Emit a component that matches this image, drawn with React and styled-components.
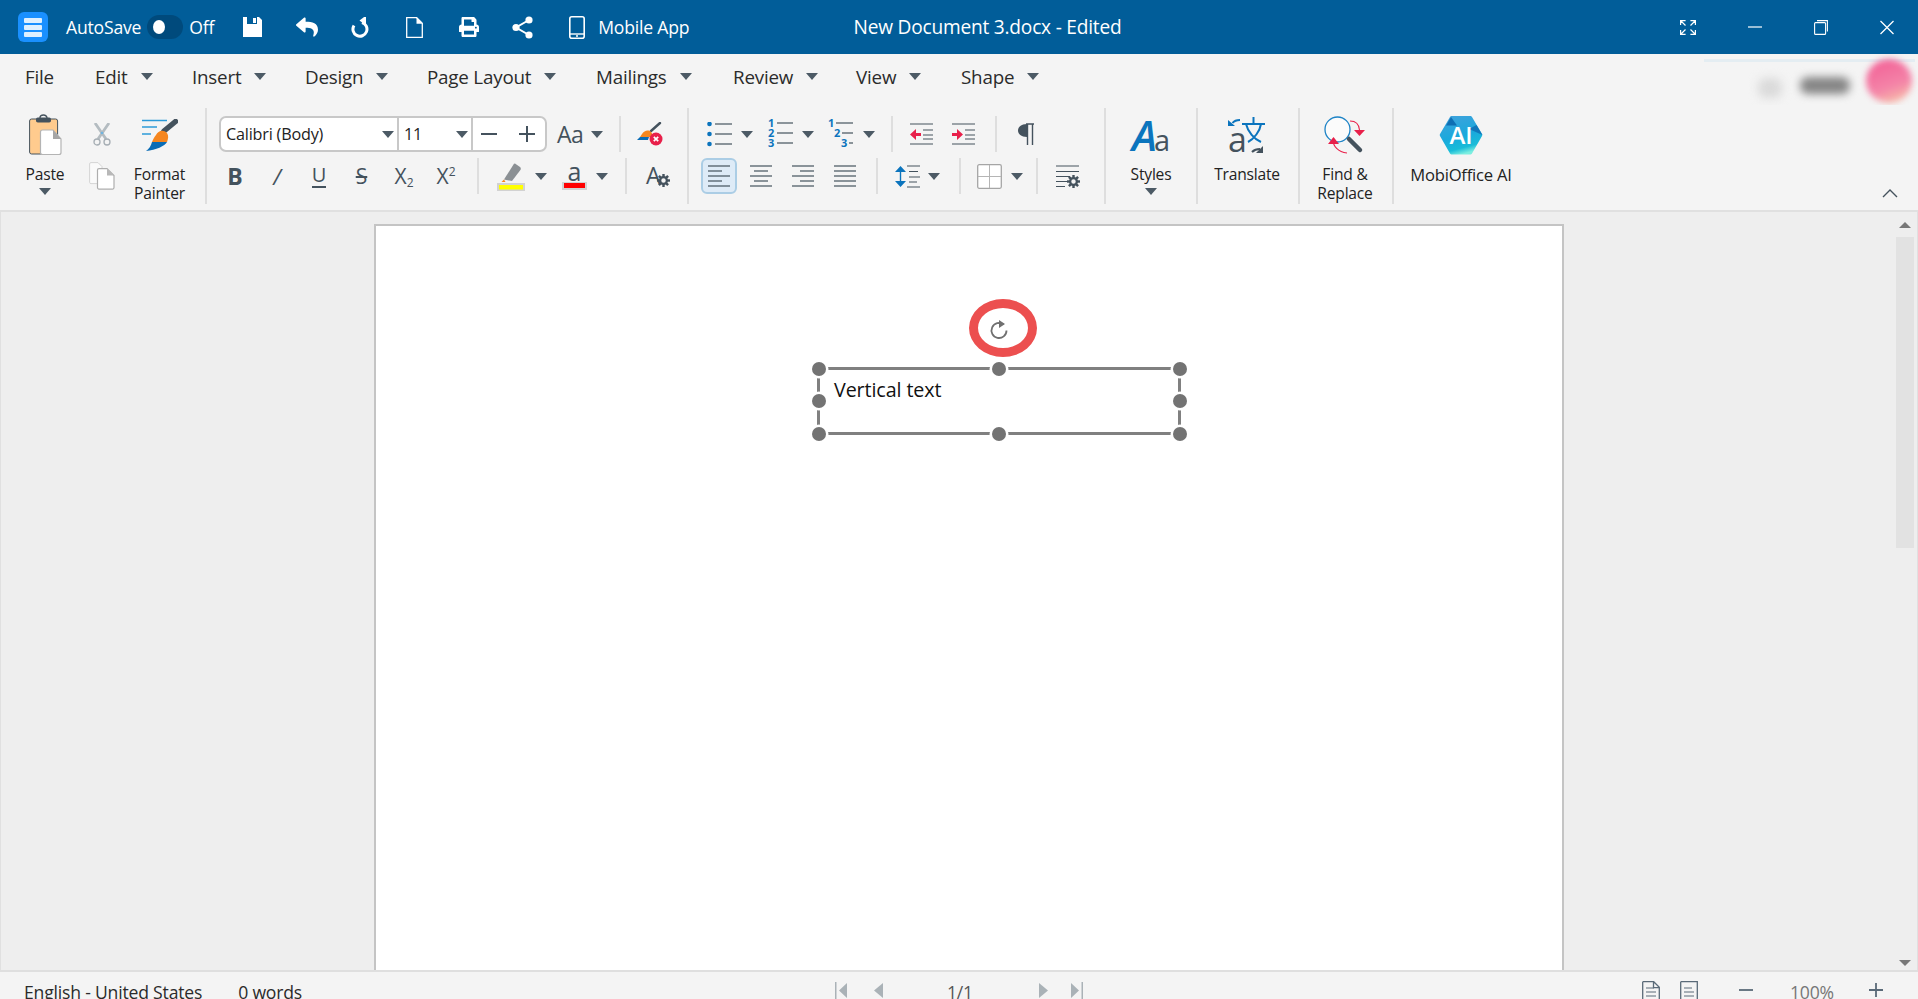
import React from "react";
import styled, { createGlobalStyle } from "styled-components";
import { FaReply, FaPrint } from "react-icons/fa";

const DARK = "#44525d";
const BLUE = "#0b74bd";
const RED = "#e8204a";
const FONT = '"Open Sans", "Noto Sans", sans-serif';

const Global = createGlobalStyle`
  * { box-sizing: border-box; }
  html, body { margin: 0; padding: 0; height: 100%; overflow: hidden; background: #f4f4f4; }
  body { font-family: ${FONT}; color: #222; }
  #root { height: 100%; }
`;

const Shell = styled.div`
  height: 999px; width: 1918px; display: flex; flex-direction: column; overflow: hidden;
`;

/* ---------- title bar ---------- */
const TitleBar = styled.header`
  height: 54px; flex: none; background: #015d99; color: #fff;
  display: grid; grid-template-columns: 700px 575px 1fr; align-items: center;
`;
const TitleLeft = styled.div`display: flex; align-items: center; height: 100%;`;
const TitleSlot = styled.div`
  display: flex; align-items: center; margin-left: ${p => p.$ml || 0}px;
  font-size: 17.6px; letter-spacing: -0.2px; white-space: nowrap;
`;
const AppIcon = styled.div`
  width: 30px; height: 30px; margin-left: 18px; border-radius: 6px; background: #1a90ff;
  display: flex; flex-direction: column; justify-content: center; gap: 2px; padding: 0 6px;
  & > i { display: block; height: 5px; background: #dff0ff; border-radius: 1px; }
`;
const Toggle = styled.div`
  width: 36px; height: 24px; border-radius: 12px; background: #004a7c; margin-left: 6px;
  display: flex; align-items: center; padding-left: 6px;
  & > i { display: block; width: 12px; height: 14px; border-radius: 50%; background: #fff; }
`;
const DocTitle = styled.div`
  text-align: center; font-size: 19.100px; letter-spacing: -0.2px; white-space: nowrap;
`;
const WindowControls = styled.div`
  display: flex; justify-content: flex-end; align-items: center; gap: 52px; padding-right: 24px;
`;

const Save = () => (
  <svg width="19" height="20" viewBox="0 0 19 20">
    <path fill="#fff" d="M0 0h16l3 3v17H0z" />
    <path fill="#015d99" d="M4 0h10v7H4z" />
    <path fill="#fff" d="M10 1h3v5h-3z" />
  </svg>
);
const Redo = () => (
  <svg width="20" height="21" viewBox="0 0 20 21" fill="none">
    <g transform="translate(20 0) scale(-1 1)">
      <path d="M9 5.500a7 7 0 1 0 8 3" stroke="#fff" strokeWidth="3" />
      <path d="M9 0.500v10l-6.500-5z" fill="#fff" transform="translate(2 -1) rotate(180 6 5)" />
    </g>
  </svg>
);
const NewDoc = () => (
  <svg width="17" height="21" viewBox="0 0 17 21" fill="none">
    <path d="M.7.7h10l5.600 5.600v14H.7z" stroke="#fff" strokeWidth="1.300" />
    <path d="M10.500.7v6h6" fill="#fff" />
  </svg>
);
const Share = () => (
  <svg width="21" height="23" viewBox="0 0 21 23" fill="none">
    <path d="M17 4 4 11.500 17 19" stroke="#fff" strokeWidth="2" />
    <circle cx="17" cy="4" r="3.600" fill="#fff" />
    <circle cx="4" cy="11.500" r="3.600" fill="#fff" />
    <circle cx="17" cy="19" r="3.600" fill="#fff" />
  </svg>
);
const Phone = () => (
  <svg width="16" height="23" viewBox="0 0 16 23" fill="none">
    <rect x=".8" y=".8" width="14.400" height="21.400" rx="2" stroke="#fff" strokeWidth="1.600" />
    <path d="M1 18h14" stroke="#fff" strokeWidth="1.400" />
    <circle cx="8" cy="20" r="1" fill="#fff" />
  </svg>
);
const Expand = () => (
  <svg width="16" height="15" viewBox="0 0 16 15" fill="none" stroke="#fff" strokeWidth="1.200">
    <path d="M.6 5V.6h5M1 1l4.500 4.500M15.400 5V.6h-5M15 1l-4.500 4.500M.6 10v4.400h5M1 14l4.500-4.500M15.400 10v4.400h-5M15 14l-4.500-4.500" />
  </svg>
);
const Minimize = () => (
  <svg width="14" height="15" viewBox="0 0 14 15"><path d="M0 7h14" stroke="#fff" strokeWidth="1.200" /></svg>
);
const Restore = () => (
  <svg width="14" height="15" viewBox="0 0 14 15" fill="none" stroke="#fff" strokeWidth="1.100">
    <rect x=".6" y="2.600" width="11" height="11.800" rx="1" />
    <path d="M3 .6h10.400v11" />
  </svg>
);
const CloseX = () => (
  <svg width="14" height="15" viewBox="0 0 14 15"><path d="M.5 1l13 13M13.500 1l-13 13" stroke="#fff" strokeWidth="1.300" /></svg>
);

/* ---------- menu bar ---------- */
const MenuBar = styled.nav`
  height: 51px; flex: none; position: relative; background: #f4f4f4; overflow: hidden;
  display: flex; align-items: center; padding: 0 0 6px 25px;
`;
const MenuItem = styled.div`
  width: ${p => p.$w}px; display: flex; align-items: center; gap: 13px;
  font-size: 18.800px; letter-spacing: -0.2px; color: #2b2b2b; white-space: nowrap;
`;
const Caret = styled.i`
  display: block; flex: none; width: 0; height: 0;
  border-left: 6px solid transparent; border-right: 6px solid transparent;
  border-top: 7px solid #4c5a65; margin-top: ${p => p.$mt || 0}px;
`;
const BlurLine = styled.div`
  position: absolute; left: 1704px; top: 5px; width: 211px; height: 3px; background: #e4edf2; filter: blur(.6px);
`;
const BlurBlob = styled.div`
  position: absolute; left: ${p => p.$x}px; top: ${p => p.$y}px; width: ${p => p.$w}px; height: ${p => p.$h}px;
  background: ${p => p.$bg}; border-radius: ${p => p.$r || "8px"}; filter: blur(${p => p.$blur || 4}px);
`;

/* ---------- ribbon ---------- */
const Ribbon = styled.section`
  height: 107px; flex: none; display: flex; align-items: stretch; background: #f4f4f4;
  padding: 3px 0 6px; border-bottom: 2px solid #e0e0e0;
`;
const GroupSep = styled.div`flex: none; width: 2px; background: #dedede;`;
const Group = styled.div`
  flex: none; width: ${p => p.$w}px; display: flex;
`;
const ToolGroup = styled(Group)`
  flex-direction: column; padding-top: 8px; gap: 6px;
`;
const ToolRow = styled.div`height: 36px; display: flex; align-items: center;`;
const Tool = styled.div`
  flex: none; display: flex; align-items: center; justify-content: ${p => p.$w ? "center" : "flex-start"};
  width: ${p => p.$w ? p.$w + "px" : "auto"}; gap: ${p => p.$gap || 0}px; margin-left: ${p => p.$ml || 0}px;
  color: ${DARK};
`;
const RowSep = styled.div`
  flex: none; width: 2px; height: 36px; background: #dedede; margin-left: ${p => p.$ml || 0}px;
`;
const Big = styled.div`
  flex: none; width: ${p => p.$w ? p.$w + "px" : "100%"}; display: flex; flex-direction: column; align-items: center;
`;
const BigIcon = styled.div`
  height: 54px; display: flex; align-items: center; justify-content: center;
`;
const BigLabel = styled.div`
  margin-top: 3px; font-size: ${p => p.$size || 15.6}px; line-height: 19px; letter-spacing: -0.2px; text-align: center; color: #222;
  white-space: nowrap;
`;
const BigCaret = styled(Caret)`margin-top: 4px;`;
const SmallCol = styled.div`
  flex: none; width: 24px; display: flex; flex-direction: column; align-items: center; padding-top: 15px; gap: 16px;
`;
const FontBox = styled.div`
  width: 328px; height: 36px; margin-left: 12px; background: #fff; border: 2px solid #c8c8c8; border-radius: 7px;
  display: flex; align-items: stretch; flex: none;
`;
const FontCell = styled.div`
  width: ${p => p.$w}px; display: flex; align-items: center; justify-content: space-between;
  padding: 0 ${p => p.$pr ?? 3}px 0 ${p => p.$pl ?? 5}px; border-right: ${p => p.$last ? "none" : "2px solid #c8c8c8"};
  font-size: 16.200px; letter-spacing: -0.2px; color: #222;
`;
const CaseText = styled.span`font-size: 23px; letter-spacing: -0.5px; color: ${DARK}; line-height: 1;`;
const Glyph = styled.span`
  font-size: ${p => p.$size || 21}px; font-weight: ${p => p.$weight || 400}; font-style: ${p => p.$italic ? "italic" : "normal"};
  line-height: 1; color: ${DARK};
  text-decoration: ${p => p.$strike ? "line-through" : "none"};
  border-bottom: ${p => p.$under ? `2px solid ${DARK}` : "none"};
  padding-bottom: ${p => p.$under ? 1 : 0}px;
  & > sub, & > sup { font-size: 12px; line-height: 0; vertical-align: ${p => p.$sup ? "8px" : "-3px"}; }
`;
const ColorA = styled.div`
  width: 25px; height: 28px; display: flex; flex-direction: column; align-items: center; justify-content: flex-end;
`;
const ColorLetter = styled.span`
  font-size: 25px; line-height: 18px; color: ${DARK}; height: 19px; margin-bottom: 1px;
`;
const ColorBar = styled.i`
  display: block; width: 100%; height: 8px; background: #f00; border: 2px solid #d2d2d2; border-top-width: 1px;
`;
const LetterGear = styled.div`
  width: 24px; height: 24px; position: relative; color: ${DARK}; font-size: 23px; line-height: 22px;
  & > svg { position: absolute; right: 0; bottom: 1px; }
`;
const ActiveAlign = styled.div`
  width: 36px; height: 36px; margin-left: 12px; flex: none; border: 2px solid #abcde5; border-radius: 6px; background: #deebf7;
  display: flex; align-items: center; justify-content: center;
`;
const StyleMark = styled.div`
  width: 38px; height: 36px; display: flex; align-items: baseline; justify-content: center; line-height: 36px;
`;
const StyleA = styled.span`font-size: 42px; font-weight: 600; font-style: italic; color: ${BLUE}; letter-spacing: -3px; line-height: 36px;`;
const Stylea = styled.span`font-size: 29px; color: ${DARK}; line-height: 36px;`;
const Collapse = styled.div`
  margin-left: auto; align-self: flex-end; padding: 0 20px 6px 0; display: flex;
`;
const AiGroup = styled(Group)`flex: 1; width: auto;`;

const Gear = ({ size = 14, color = DARK }) => (
  <svg width={size} height={size} viewBox="0 0 14 14">
    {[0, 45, 90, 135, 180, 225, 270, 315].map(a => (
      <rect key={a} x="5.700" y="0" width="2.600" height="3.500" fill={color} transform={`rotate(${a} 7 7)`} />
    ))}
    <circle cx="7" cy="7" r="3.600" fill="none" stroke={color} strokeWidth="2.400" />
  </svg>
);

const PasteIcon = () => (
  <svg width="33" height="42" viewBox="0 0 33 42">
    <rect x=".6" y="5" width="28" height="35" rx="2" fill="#ffcb8e" stroke={DARK} strokeWidth="1" />
    <path d="M11 4a3.500 3 0 0 1 7 0" fill="none" stroke={DARK} strokeWidth="1.400" />
    <rect x="7" y="3.500" width="15" height="5" rx="1.800" fill={DARK} />
    <path d="M13.500 16h10.500l8 9v13.500a2 2 0 0 1-2 2H13.500a2 2 0 0 1-2-2V18a2 2 0 0 1 2-2z" fill="#fff" stroke="#b4b4b4" strokeWidth="1.200" />
    <path d="M24 16v9h8z" fill="#a6a6a6" />
  </svg>
);
const Scissors = () => (
  <svg width="18" height="23" viewBox="0 0 18 23" fill="none">
    <path d="M2 0l11 16M16 0L5 16" stroke="#b4bcc1" strokeWidth="2.800" />
    <circle cx="4" cy="19" r="3" stroke="#a6aeb4" strokeWidth="1.300" />
    <circle cx="14" cy="19" r="3" stroke="#a6aeb4" strokeWidth="1.300" />
    <circle cx="9" cy="10" r="1.300" fill="#6fb4e0" />
  </svg>
);
const CopyIcon = () => (
  <svg width="26" height="28" viewBox="0 0 26 28" fill="none">
    <path d="M2 .6h7l4 4v17H2a1.400 1.400 0 0 1-1.400-1.400V2A1.400 1.400 0 0 1 2 .6z" fill="#fafafa" stroke="#d4d4d4" />
    <path d="M10 6.600h8l7 7v12a1.500 1.500 0 0 1-1.500 1.500H10a1.500 1.500 0 0 1-1.500-1.500v-17.500A1.500 1.500 0 0 1 10 6.600z" fill="#fff" stroke="#aeaeae" strokeWidth="1.200" />
    <path d="M18 6.600v7h7z" fill="#b8b8b8" />
  </svg>
);
const Painter = () => (
  <svg width="36" height="33" viewBox="0 0 36 33" fill="none">
    <path d="M0 1.500h25M0 8h15M0 15h9" stroke="#2c9ad8" strokeWidth="1.400" />
    <path d="M33.500 2.500 22 12" stroke={DARK} strokeWidth="5.500" strokeLinecap="round" />
    <path d="M14 16C16 12 21 10 25 14c2 3 1 6 0 9H10c1-2 2-5 4-7z" fill="#f5861f" />
    <path d="M10 23h15c-2 4-11 8-21 9 3-2 5-5 6-9z" fill="#0a6cb5" />
  </svg>
);
const ClearFormat = () => (
  <svg width="26" height="24" viewBox="0 0 26 24" fill="none">
    <path d="M23 1 14 9" stroke={DARK} strokeWidth="2.400" strokeLinecap="round" />
    <path d="M5 12c2-3 6-5 9-2 1 1 2 3 2 5H3z" fill="#f5861f" />
    <path d="M3 15h9l-1 3H0c1-1 2-2 3-3z" fill="#0a6cb5" />
    <circle cx="19" cy="17" r="6.500" fill={RED} />
    <path d="M16.800 14.800l4.400 4.400M21.200 14.800l-4.400 4.400" stroke="#fff" strokeWidth="1.700" />
  </svg>
);
const Highlighter = () => (
  <svg width="28" height="29" viewBox="0 0 28 29">
    <path d="M19 1.500l5 3.500c1 .8 1 2 .4 3L16 19l-8-1.500L18 1.800z" fill="#8b9094" transform="translate(-1 0)" />
    <path d="M7 17.500l-2.500 2.500h4z" fill="#f5861f" />
    <rect x="1" y="22" width="26" height="6.500" fill="#ff0" stroke="#d2d2d2" strokeWidth="2" />
  </svg>
);
const Lines = ({ rows, w = 22, h = 22 }) => (
  <svg width={w} height={h} viewBox={`0 0 ${w} ${h}`} fill="none" stroke={DARK} strokeWidth="1.200">
    {rows.map((r, i) => <path key={i} d={`M${r[0]} ${r[2]}H${r[1]}`} />)}
  </svg>
);
const ys = [1, 6, 11, 16, 21];
const AlignLines = ({ kind }) => {
  const short = { left: [0, 14], center: [4, 18], right: [8, 22], just: [0, 22] }[kind];
  return <Lines rows={ys.map((y, i) => (i % 2 ? [short[0], short[1], y] : [0, 22, y]))} />;
};
const Bullets = () => (
  <svg width="25" height="25" viewBox="0 0 25 25" fill="none">
    {[2, 12, 22].map(y => (
      <g key={y}>
        <circle cx="2.500" cy={y} r="2.300" fill={BLUE} />
        <path d={`M8 ${y}H25`} stroke={DARK} strokeWidth="1.200" />
      </g>
    ))}
  </svg>
);
const NumText = styled.text`font-family: ${FONT}; font-weight: 700; font-size: 11px; fill: ${BLUE};`;
const OpenSvg = styled.svg`overflow: visible;`;
const Numbers = () => (
  <OpenSvg width="26" height="26" viewBox="0 0 26 26" fill="none">
    {[["1", 2], ["2", 12], ["3", 22]].map(([n, y]) => (
      <g key={n}>
        <NumText x="0" y={y + 4}>{n}</NumText>
        <path d={`M9 ${y}H25`} stroke={DARK} strokeWidth="1.200" />
      </g>
    ))}
  </OpenSvg>
);
const MultiLevel = () => (
  <OpenSvg width="27" height="26" viewBox="0 0 27 26" fill="none">
    <NumText x="0" y="6">1</NumText>
    <path d="M8 2h17" stroke={DARK} strokeWidth="1.200" />
    <NumText x="6" y="16">2</NumText>
    <path d="M14 12h11" stroke={DARK} strokeWidth="1.200" />
    <NumText x="13" y="26">3</NumText>
    <path d="M21 22h4" stroke={DARK} strokeWidth="1.200" />
  </OpenSvg>
);
const Indent = ({ dir }) => (
  <svg width="23" height="22" viewBox="0 0 23 22" fill="none">
    <path d="M0 1h23M0 21h23M13 7h10M13 12h10M13 16h10" stroke={DARK} strokeWidth="1.200" />
    {dir === "left"
      ? <path d="M0 11.500l6-5.500v4h5v3H6v4z" fill={RED} />
      : <path d="M11 11.500l-6-5.500v4H0v3h5v4z" fill={RED} />}
  </svg>
);
const Pilcrow = () => (
  <svg width="16" height="23" viewBox="0 0 16 23" fill="none">
    <path d="M9 1C3 1 0 4 0 7.500S3 14 9 14z" fill={DARK} />
    <path d="M8 1h8M9.500 1v21M14.500 1v21" stroke={DARK} strokeWidth="1.400" />
  </svg>
);
const LineSpacing = () => (
  <svg width="25" height="23" viewBox="0 0 25 23" fill="none">
    <path d="M5.500 3v17" stroke={BLUE} strokeWidth="1.400" />
    <path d="M0 7l5.500-6 5.500 6zM0 16l5.500 6 5.500-6z" fill={BLUE} />
    <path d="M12 1h13M14 6.500h9M14 12h11M14 17h8M12 22h13" stroke={DARK} strokeWidth="1.200" />
  </svg>
);
const TableIcon = () => (
  <svg width="25" height="25" viewBox="0 0 25 25" fill="none">
    <rect x=".7" y=".7" width="23.600" height="23.600" rx="1.500" fill="#fff" stroke="#a5a5a5" strokeWidth="1.300" />
    <path d="M12.500 1v23M1 12.500h23" stroke="#b5b5b5" />
  </svg>
);
const ParaSettings = () => (
  <svg width="24" height="23" viewBox="0 0 24 23" fill="none">
    <path d="M0 1h23M0 6.500h23M0 11.500h14M0 16.500h11M0 21.500h9" stroke={DARK} strokeWidth="1.200" />
    <g transform="translate(11 10)"><Gear size={13} /></g>
  </svg>
);
const TranslateText = styled.text`font-family: ${FONT}; font-size: 34px; fill: ${DARK};`;
const TranslateIcon = () => (
  <OpenSvg width="38" height="37" viewBox="0 0 38 37" fill="none">
    <path d="M14 7h23M25.500 0v7" stroke={BLUE} strokeWidth="2" />
    <path d="M18 7c2 8 8 15 15 18M33 7c-1 7-7 15-13 18" stroke={BLUE} strokeWidth="2" />
    <path d="M12 3C8 3 6 4 4.500 6" stroke={BLUE} strokeWidth="2" />
    <path d="M0 3l7 6H0z" fill={BLUE} />
    <TranslateText x="0" y="35">a</TranslateText>
    <path d="M24 35c3-3 5-3 8-3" stroke={DARK} strokeWidth="2" />
    <path d="M35 29v7h-7z" fill={DARK} />
  </OpenSvg>
);
const FindIcon = () => (
  <svg width="42" height="38" viewBox="0 0 42 38" fill="none">
    <circle cx="13.500" cy="13.500" r="12.500" fill="#fbfbfb" stroke="#1d83c6" strokeWidth="1.300" />
    <path d="M25 23l11 11" stroke={DARK} strokeWidth="4.500" strokeLinecap="round" />
    <path d="M26 5c5 0 9 3 9.500 9" stroke={RED} strokeWidth="1.100" />
    <path d="M30 14h11l-5.500 6z" fill={RED} />
    <path d="M9 24c0 6 5 12 14 13" stroke={RED} strokeWidth="1.100" />
    <path d="M4 28l5.500-7 5.500 7z" fill={RED} />
  </svg>
);
const AiText = styled.text`font-family: ${FONT}; font-size: 24px; font-weight: 600; fill: #fff;`;
const AiIcon = () => (
  <svg width="44" height="40" viewBox="0 0 44 40">
    <defs>
      <linearGradient id="aiGrad" x1="0.200" y1="0" x2="0.500" y2="1">
        <stop offset="0" stopColor="#3fa2dc" />
        <stop offset=".55" stopColor="#1aa9dc" />
        <stop offset=".85" stopColor="#19bcd8" />
        <stop offset="1" stopColor="#7ceee0" />
      </linearGradient>
    </defs>
    <path d="M13 1h18c1 0 1.500.3 2 1l10 17c.4.700.4 1.300 0 2L33 38.500c-.5.700-1 1-2 1H13c-1 0-1.500-.3-2-1L1 21c-.4-.700-.4-1.300 0-2L11 2c.5-.7 1-1 2-1z" fill="url(#aiGrad)" />
    <path d="M12 2 7 10.500h11z" fill="#0f6fb4" />
    <path d="M43.500 20 37.500 10 30 14z" fill="#0f6fb4" opacity=".85" />
    <AiText x="22" y="29" textAnchor="middle">AI</AiText>
  </svg>
);

/* ---------- workspace ---------- */
const Workspace = styled.main`
  flex: 1; min-height: 0; display: flex; background: #eeeeee;
  border-left: 1px solid #e0e0e0; border-right: 1px solid #e0e0e0; overflow: hidden;
`;
const Canvas = styled.div`
  flex: 1; min-width: 0; display: flex; flex-direction: column; padding: 12px 0 0 373px;
`;
const Page = styled.article`
  flex: 1; width: 1190px; position: relative; background: #fff;
  border: 2px solid #c4c4c4; border-bottom: none;
`;
const Frame = styled.div`
  position: absolute; left: 441px; top: 141px; width: 364px; height: 68px;
  border: 3px solid #808080; padding: 7px 0 0 14px;
`;
const FrameText = styled.div`
  font-size: 19.700px; line-height: 26px; letter-spacing: -0.1px; color: #111;
`;
const HandleLayer = styled.div`
  position: absolute; inset: -1.500px;
`;
const Handle = styled.i`
  position: absolute; left: ${p => p.$x}%; top: ${p => p.$y}%; width: 14px; height: 14px;
  transform: translate(-50%, -50%); background: #737373; border-radius: 50%; box-shadow: 0 0 0 2.500px #fff;
`;
const Callout = styled.div`
  position: absolute; left: 593px; top: 73px; width: 68px; height: 58px;
  border: 9px solid #ec4f4f; border-radius: 50%;
`;
const RotateMark = styled.div`
  position: absolute; left: 613px; top: 94px; width: 20px; height: 20px; display: flex;
`;
const Scrollbar = styled.aside`
  flex: none; width: 23px; display: flex; flex-direction: column; align-items: center; padding: 10px 2px 4px 0;
`;
const ScrollThumb = styled.div`
  width: 18px; height: 311px; margin-top: 9px; background: #e2e2e2;
`;
const ArrowUp = styled.i`
  display: block; width: 0; height: 0; border-left: 6px solid transparent; border-right: 6px solid transparent;
  border-bottom: 6px solid #777; 
`;
const ArrowDown = styled.i`
  display: block; margin-top: auto; width: 0; height: 0; border-left: 6px solid transparent; border-right: 6px solid transparent;
  border-top: 6px solid #777;
`;

/* ---------- status bar ---------- */
const StatusBar = styled.footer`
  height: 29px; flex: none; border-top: 2px solid #dfdfdf; background: #f4f4f4; overflow: hidden;
  display: flex; align-items: flex-start; padding: 8px 0 0 24px; position: relative;
`;
const StatusText = styled.span`
  margin-left: ${p => p.$ml || 0}px; font-size: 17.600px; line-height: 24px; letter-spacing: -0.2px; color: ${p => p.$c || "#2b2b2b"}; white-space: nowrap;
`;
const StatusIcon = styled.span`
  display: flex; margin-left: ${p => p.$ml || 0}px; margin-top: ${p => p.$mt ?? 1}px; flex: none;
`;
const Nav = ({ d }) => (
  <svg width="13" height="17" viewBox="0 0 13 17" fill="#aab2b7"><path d={d} /></svg>
);
const PageOne = ({ fold }) => (
  <svg width="18" height="19" viewBox="0 0 18 19" fill="none" stroke="#5a6a78" strokeWidth="1.300">
    <path d={fold ? "M.7.7h11l5.600 5.600V19M.7.7V19M11.500.7v6h6" : "M.7.7h16.600V19M.7.7V19"} />
    <path d="M4 7h8M4 11h10M4 15h10" strokeWidth="1.200" />
  </svg>
);

const menu = [
  ["Edit", 97], ["Insert", 113], ["Design", 122], ["Page Layout", 169],
  ["Mailings", 137], ["Review", 123], ["View", 105], ["Shape", 90],
];
const handles = [[0, 0], [50, 0], [100, 0], [0, 50], [100, 50], [0, 100], [50, 100], [100, 100]];

export default function App() {
  return (
    <Shell>
      <Global />
      <TitleBar>
        <TitleLeft>
          <AppIcon><i /><i /><i /></AppIcon>
          <TitleSlot $ml={18}>AutoSave</TitleSlot>
          <Toggle><i /></Toggle>
          <TitleSlot $ml={6}>Off</TitleSlot>
          <TitleSlot $ml={29}><Save /></TitleSlot>
          <TitleSlot $ml={34}><FaReply size={22} /></TitleSlot>
          <TitleSlot $ml={33}><Redo /></TitleSlot>
          <TitleSlot $ml={35}><NewDoc /></TitleSlot>
          <TitleSlot $ml={36}><FaPrint size={20} /></TitleSlot>
          <TitleSlot $ml={33}><Share /></TitleSlot>
          <TitleSlot $ml={36}><Phone /></TitleSlot>
          <TitleSlot $ml={13}>Mobile App</TitleSlot>
        </TitleLeft>
        <DocTitle>New Document 3.docx - Edited</DocTitle>
        <WindowControls>
          <Expand /><Minimize /><Restore /><CloseX />
        </WindowControls>
      </TitleBar>

      <MenuBar>
        <MenuItem $w={70}>File</MenuItem>
        {menu.map(([label, w]) => (
          <MenuItem key={label} $w={w}>{label}<Caret /></MenuItem>
        ))}
        <BlurLine />
        <BlurBlob $x={1758} $y={24} $w={24} $h={20} $bg="#dadada" $blur={5} />
        <BlurBlob $x={1800} $y={23} $w={50} $h={17} $bg="#858585" />
        <BlurBlob $x={1866} $y={5} $w={46} $h={44} $r="50%" $blur={3} $bg="linear-gradient(160deg,#f25c94 0%,#f484a8 60%,#f8d0a8 100%)" />
      </MenuBar>

      <Ribbon>
        <Group $w={205}>
          <Big $w={90}>
            <BigIcon><PasteIcon /></BigIcon>
            <BigLabel>Paste</BigLabel>
            <BigCaret />
          </Big>
          <SmallCol><Scissors /><CopyIcon /></SmallCol>
          <Big $w={91}>
            <BigIcon><Painter /></BigIcon>
            <BigLabel>Format<br />Painter</BigLabel>
          </Big>
        </Group>
        <GroupSep />

        <ToolGroup $w={480}>
          <ToolRow>
            <FontBox>
              <FontCell $w={178}>Calibri (Body)<Caret /></FontCell>
              <FontCell $w={74}>11<Caret /></FontCell>
              <FontCell $w={72} $last $pl={8} $pr={10}>
                <svg width="16" height="16" viewBox="0 0 16 16"><path d="M0 8h16" stroke={DARK} strokeWidth="2" /></svg>
                <svg width="16" height="16" viewBox="0 0 16 16"><path d="M0 8h16M8 0v16" stroke={DARK} strokeWidth="2" /></svg>
              </FontCell>
            </FontBox>
            <Tool $ml={10} $gap={8}><CaseText>Aa</CaseText><Caret /></Tool>
            <RowSep $ml={16} />
            <Tool $ml={16}><ClearFormat /></Tool>
          </ToolRow>
          <ToolRow>
            <Tool $ml={7} $w={42}><Glyph $weight={700} $size={23}>B</Glyph></Tool>
            <Tool $w={42}><Glyph $italic $size={22}>/</Glyph></Tool>
            <Tool $w={42}><Glyph $under $size={20}>U</Glyph></Tool>
            <Tool $w={43}><Glyph $strike $size={21}>S</Glyph></Tool>
            <Tool $w={42}><Glyph $size={21}>X<sub>2</sub></Glyph></Tool>
            <Tool $w={42}><Glyph $size={21} $sup>X<sup>2</sup></Glyph></Tool>
            <RowSep $ml={10} />
            <Tool $ml={18} $gap={10}><Highlighter /><Caret /></Tool>
            <Tool $ml={15} $gap={9}>
              <ColorA><ColorLetter>a</ColorLetter><ColorBar /></ColorA>
              <Caret />
            </Tool>
            <RowSep $ml={17} />
            <Tool $ml={19}><LetterGear>A<Gear size={13} /></LetterGear></Tool>
          </ToolRow>
        </ToolGroup>
        <GroupSep />

        <ToolGroup $w={415}>
          <ToolRow>
            <Tool $ml={18} $gap={9}><Bullets /><Caret /></Tool>
            <Tool $ml={15} $gap={8}><Numbers /><Caret /></Tool>
            <Tool $ml={14} $gap={8}><MultiLevel /><Caret /></Tool>
            <RowSep $ml={16} />
            <Tool $ml={17}><Indent dir="left" /></Tool>
            <Tool $ml={19}><Indent dir="right" /></Tool>
            <RowSep $ml={20} />
            <Tool $ml={21}><Pilcrow /></Tool>
          </ToolRow>
          <ToolRow>
            <ActiveAlign><AlignLines kind="left" /></ActiveAlign>
            <Tool $ml={13}><AlignLines kind="center" /></Tool>
            <Tool $ml={20}><AlignLines kind="right" /></Tool>
            <Tool $ml={20}><AlignLines kind="just" /></Tool>
            <RowSep $ml={20} />
            <Tool $ml={17} $gap={8}><LineSpacing /><Caret /></Tool>
            <RowSep $ml={19} />
            <Tool $ml={16} $gap={9}><TableIcon /><Caret /></Tool>
            <RowSep $ml={13} />
            <Tool $ml={18}><ParaSettings /></Tool>
          </ToolRow>
        </ToolGroup>
        <GroupSep />

        <Group $w={90}>
          <Big $w={90}>
            <BigIcon><StyleMark><StyleA>A</StyleA><Stylea>a</Stylea></StyleMark></BigIcon>
            <BigLabel>Styles</BigLabel>
            <BigCaret />
          </Big>
        </Group>
        <GroupSep />
        <Group $w={100}>
          <Big $w={98}>
            <BigIcon><TranslateIcon /></BigIcon>
            <BigLabel>Translate</BigLabel>
          </Big>
        </Group>
        <GroupSep />
        <Group $w={92}>
          <Big $w={90}>
            <BigIcon><FindIcon /></BigIcon>
            <BigLabel>Find &amp;<br />Replace</BigLabel>
          </Big>
        </Group>
        <GroupSep />
        <AiGroup>
          <Big $w={134}>
            <BigIcon><AiIcon /></BigIcon>
            <BigLabel $size={16.6}>MobiOffice AI</BigLabel>
          </Big>
          <Collapse>
            <svg width="16" height="9" viewBox="0 0 16 9" fill="none"><path d="M1 8l7-7 7 7" stroke={DARK} strokeWidth="1.400" /></svg>
          </Collapse>
        </AiGroup>
      </Ribbon>

      <Workspace>
        <Canvas>
          <Page>
            <Callout />
            <RotateMark>
              <svg width="20" height="20" viewBox="0 0 20 20" fill="none">
                <path d="M14.500 4.500a7.500 7.500 0 1 0 3 6" stroke="#707070" strokeWidth="1.800" />
                <path d="M10 0v8l6-4z" fill="#707070" />
              </svg>
            </RotateMark>
            <Frame>
              <FrameText>Vertical text</FrameText>
              <HandleLayer>
                {handles.map(([x, y]) => <Handle key={`${x}-${y}`} $x={x} $y={y} />)}
              </HandleLayer>
            </Frame>
          </Page>
        </Canvas>
        <Scrollbar>
          <ArrowUp />
          <ScrollThumb />
          <ArrowDown />
        </Scrollbar>
      </Workspace>

      <StatusBar>
        <StatusText>English - United States</StatusText>
        <StatusText $ml={36}>0 words</StatusText>
        <StatusIcon $ml={533} $mt={2}><Nav d="M0 0h1.500v17H0zM12 1v15L4 8.500z" /></StatusIcon>
        <StatusIcon $ml={24} $mt={2}><Nav d="M11 1v15L2 8.500z" /></StatusIcon>
        <StatusText $ml={62} $c="#555">1/1</StatusText>
        <StatusIcon $ml={64} $mt={2}><Nav d="M2 1v15l9-7.500z" /></StatusIcon>
        <StatusIcon $ml={20} $mt={2}><Nav d="M11.500 0H13v17h-1.500zM1 1v15l8-7.500z" /></StatusIcon>
        <StatusIcon $ml={559} $mt={1}><PageOne fold /></StatusIcon>
        <StatusIcon $ml={20} $mt={1}><PageOne /></StatusIcon>
        <StatusIcon $ml={41} $mt={2}>
          <svg width="14" height="16" viewBox="0 0 14 16"><path d="M0 8h14" stroke="#5a6a78" strokeWidth="1.800" /></svg>
        </StatusIcon>
        <StatusText $ml={37} $c="#777">100%</StatusText>
        <StatusIcon $ml={35} $mt={2}>
          <svg width="14" height="16" viewBox="0 0 14 16"><path d="M0 8h14M7 1v14" stroke="#5a6a78" strokeWidth="1.800" /></svg>
        </StatusIcon>
      </StatusBar>
    </Shell>
  );
}
